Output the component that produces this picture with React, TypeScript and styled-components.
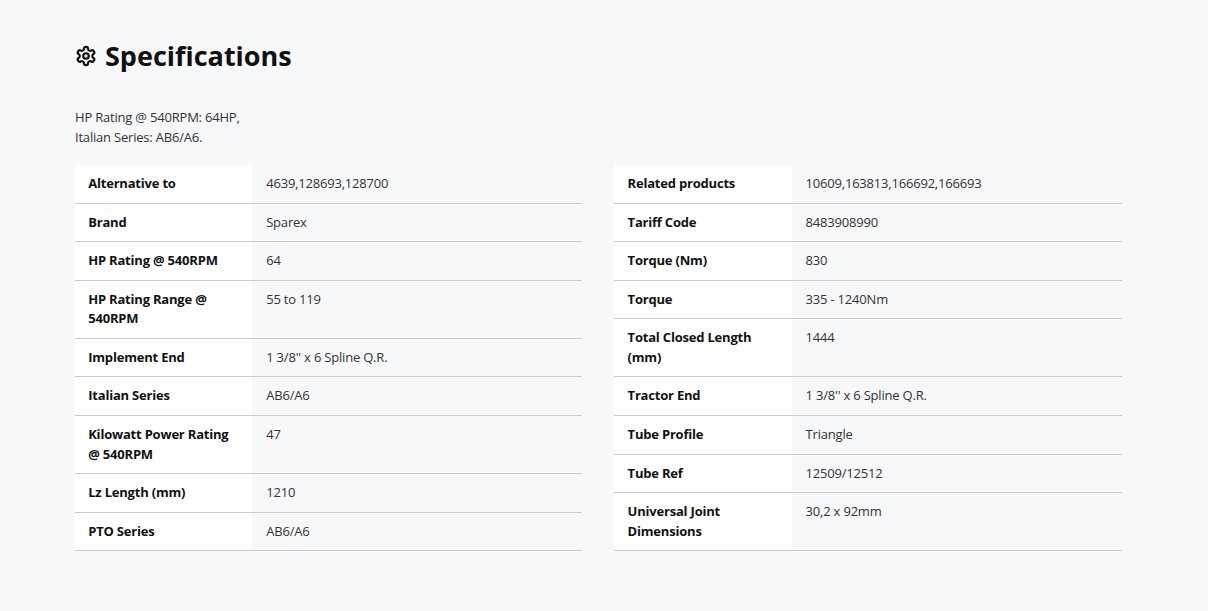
import React from "react";
import styled, { createGlobalStyle } from "styled-components";
import { LuSettings } from "react-icons/lu";

const GlobalStyle = createGlobalStyle`
  html, body {
    margin: 0;
    padding: 0;
    background: #f7f8fa;
    font-family: "Open Sans", sans-serif;
    color: #333;
  }
`;

const Page = styled.div`
  width: 1208px;
  height: 611px;
  box-sizing: border-box;
  padding: 37px 86px 0 75px;
  overflow: hidden;
`;

const Title = styled.h2`
  display: flex;
  align-items: center;
  gap: 8px;
  margin: 0 0 32px;
  font-size: 27px;
  line-height: 38px;
  font-weight: 700;
  color: #111;
  svg {
    width: 22px;
    height: 22px;
    stroke-width: 2.4;
  }
`;

const Intro = styled.p`
  margin: 0 0 18.15px;
  font-size: 13px;
  line-height: 20px;
  letter-spacing: -0.2px;
  color: #333;
`;

const Columns = styled.div`
  display: grid;
  grid-template-columns: 507.4px 507.6px;
  column-gap: 32px;
  align-items: start;
`;

const Table = styled.div`
  display: flex;
  flex-direction: column;
`;

const Row = styled.div`
  display: grid;
  grid-template-columns: 177.4px 1fr;
  border-bottom: 1px solid #c9cbce;
`;

const Label = styled.div`
  padding: 9px 13.2px;
  background: #fff;
  font-size: 13px;
  line-height: 19.55px;
  letter-spacing: -0.2px;
  font-weight: 700;
  color: #111;
`;

const Value = styled.div`
  padding: 9px 13.8px;
  font-size: 13px;
  line-height: 19.55px;
  letter-spacing: -0.2px;
  color: #333;
`;

const leftSpecs: [string, string][] = [
  ["Alternative to", "4639,128693,128700"],
  ["Brand", "Sparex"],
  ["HP Rating @ 540RPM", "64"],
  ["HP Rating Range @ 540RPM", "55 to 119"],
  ["Implement End", "1 3/8'' x 6 Spline Q.R."],
  ["Italian Series", "AB6/A6"],
  ["Kilowatt Power Rating @ 540RPM", "47"],
  ["Lz Length (mm)", "1210"],
  ["PTO Series", "AB6/A6"],
];

const rightSpecs: [string, string][] = [
  ["Related products", "10609,163813,166692,166693"],
  ["Tariff Code", "8483908990"],
  ["Torque (Nm)", "830"],
  ["Torque", "335 - 1240Nm"],
  ["Total Closed Length (mm)", "1444"],
  ["Tractor End", "1 3/8'' x 6 Spline Q.R."],
  ["Tube Profile", "Triangle"],
  ["Tube Ref", "12509/12512"],
  ["Universal Joint Dimensions", "30,2 x 92mm"],
];

const SpecTable = ({ specs }: { specs: [string, string][] }) => (
  <Table>
    {specs.map(([label, value]) => (
      <Row key={label}>
        <Label>{label}</Label>
        <Value>{value}</Value>
      </Row>
    ))}
  </Table>
);

const App = () => {
  return (
    <Page>
      <GlobalStyle />
      <Title>
        <LuSettings />
        Specifications
      </Title>
      <Intro>
        HP Rating @ 540RPM: 64HP,
        <br />
        Italian Series: AB6/A6.
      </Intro>
      <Columns>
        <SpecTable specs={leftSpecs} />
        <SpecTable specs={rightSpecs} />
      </Columns>
    </Page>
  );
};

export default App;
